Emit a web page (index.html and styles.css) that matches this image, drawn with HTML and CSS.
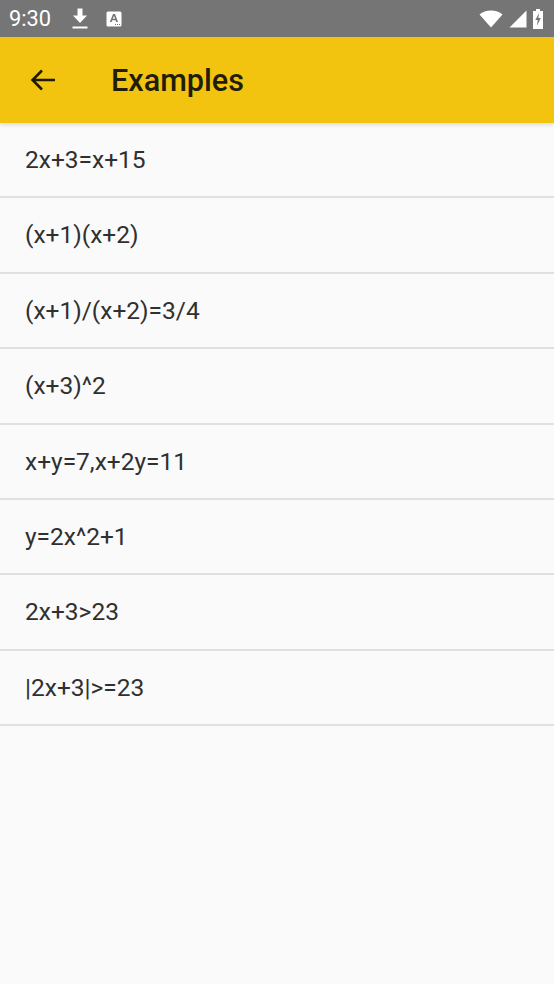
FILE: index.html
```html
<!DOCTYPE html>
<html lang="en">
<head>
<meta charset="utf-8">
<title>Examples</title>
<link rel="stylesheet" href="styles.css">
</head>
<body>
<div class="status">
  <div class="status-left">
    <span class="time">9:30</span>
    <svg class="ic-dl" width="16" height="21" viewBox="0 0 16 21"><path d="M5.500 0.500h5v7h4.500L8 15 1 7.500h4.500zM0.500 18.500h15v2h-15z" fill="#fff"/></svg>
    <svg class="ic-a" width="16" height="16" viewBox="0 0 16 16"><rect x="0.500" y="0.500" width="15" height="15" rx="1.500" fill="#fff"/><path d="M3.800 11 7 3h2l3 8h-1.800l-.6-1.800H6.300L5.600 11zM6.800 7.800h2.300L8 4.800z" fill="#757575"/><path d="M9 13h1v1H9zM11 13h1v1h-1zM13 13h1v1h-1z" fill="#757575"/></svg>
  </div>
  <div class="status-right">
    <svg width="24" height="18" viewBox="0 0 24 18"><path d="M0.500 4.500C3.500 1.800 7.500 0.500 12 0.500s8.500 1.300 11.500 4L12 17.500z" fill="#fff"/></svg>
    <svg width="18" height="18" viewBox="0 0 18 18"><path d="M17.500 0.500v17H0.500z" fill="#fff"/></svg>
    <svg width="10" height="20" viewBox="0 0 10 20"><path d="M3 0h4v2h3v18H0V2h3z" fill="#fff"/><path d="M6.200 4 2.300 11h2.500l-1 6 4-8H5.300z" fill="#757575"/></svg>
  </div>
</div>
<header class="appbar">
  <svg class="back" width="28" height="24" viewBox="0 0 28 24"><path d="M26 12H4M13 2.500 3.500 12l9.500 9.500" fill="none" stroke="#1f1a06" stroke-width="2.500"/></svg>
  <h1 class="title">Examples</h1>
</header>
<ul class="list">
  <li class="row">2x+3=x+15</li>
  <li class="row">(x+1)(x+2)</li>
  <li class="row">(x+1)/(x+2)=3/4</li>
  <li class="row">(x+3)^2</li>
  <li class="row">x+y=7,x+2y=11</li>
  <li class="row">y=2x^2+1</li>
  <li class="row">2x+3&gt;23</li>
  <li class="row">|2x+3|&gt;=23</li>
</ul>
</body>
</html>
```
FILE: styles.css
```css
html, body { margin: 0; padding: 0; height: 100%; }
body {
  background: #fafafa;
  font-family: Roboto, "Liberation Sans", sans-serif;
  overflow: hidden;
}
.status {
  height: 37px;
  background: #757575;
  display: flex;
  align-items: center;
  justify-content: space-between;
  color: #fff;
}
.status-left { display: flex; align-items: center; margin-left: 9px; }
.time { font-size: 21.800px; line-height: 37px; }
.ic-dl { margin-left: 21px; }
.ic-a { margin-left: 18px; }
.status-right { display: flex; align-items: center; gap: 6px; margin-right: 11px; }
.appbar {
  height: 86px;
  background: #f2c40f;
  display: flex;
  align-items: center;
  box-shadow: 0 2px 4px rgba(0,0,0,.12);
  position: relative;
}
.back { margin-left: 29px; }
.title {
  margin: 0 0 0 54px;
  font-size: 30.600px;
  font-weight: 500;
  color: #221d08;
}
.list { list-style: none; margin: 0; padding: 0; }
.row {
  height: 73.400px;
  line-height: 74px;
  padding-left: 25px;
  font-size: 24.500px;
  color: #303030;
  border-bottom: 2px solid #e0e0e0;
}
```
